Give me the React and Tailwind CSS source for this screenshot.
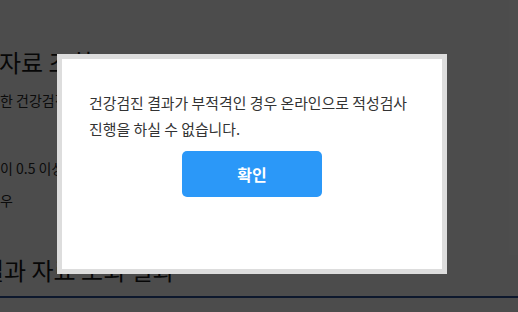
export default function App() {
  return (
    <div className="relative w-[518px] h-[312px] overflow-hidden bg-white" style={{ fontFamily: '"Noto Sans CJK KR", "Noto Sans", sans-serif' }}>
      <div className="text-[#2a2a2a]">
        <h2 className="pt-[44px] text-[24px] leading-[36px] text-[#1a1a1a] -ml-[1px] whitespace-nowrap">자료 조회</h2>
        <p className="mt-[9px] text-[14px] leading-[22px] whitespace-nowrap">한 건강검진 결과</p>
        <p className="mt-[46px] text-[14px] leading-[22px] whitespace-nowrap">이 0.5 이상</p>
        <p className="mt-[10px] text-[14px] leading-[22px] whitespace-nowrap">우</p>
        <h2 className="mt-[41px] text-[24px] leading-[36px] text-[#1a1a1a] -ml-[18px] whitespace-nowrap">결과 자료 조회 결과</h2>
        <div className="mt-[8px] h-[2px] bg-[#2c5096]" />
      </div>
      <div className="absolute inset-0 bg-black/70" />
      <div className="absolute left-[57px] top-[54px] w-[390px] h-[220px] border-[5px] border-[#dddddd] bg-white">
        <div className="px-[27px] pt-[31px]">
          <p className="text-[14.9px] leading-[26px] text-[#333] whitespace-nowrap">
            건강검진 결과가 부적격인 경우 온라인으로 적성검사<br />진행을 하실 수 없습니다.
          </p>
          <div className="mt-[9px] flex justify-center">
            <button className="w-[140px] h-[46px] rounded-[5px] bg-[#2b98f8] text-white text-[16px] font-bold">확인</button>
          </div>
        </div>
      </div>
    </div>
  );
}
